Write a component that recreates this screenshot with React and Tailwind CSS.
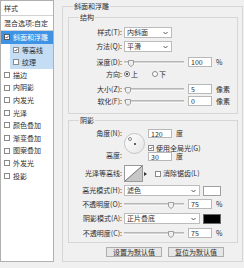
import React from "react";

const font = { fontFamily: '"Noto Sans CJK SC", "Noto Sans", sans-serif' };

const Check = ({ checked, dark }) => (
    <span
        className={`w-[6px] h-[6px] shrink-0 border bg-white flex items-center justify-center ${
            dark ? "border-[#5a5a5a]" : "border-[#8a8a8a]"
        }`}
    >
        {checked && (
            <svg width="6" height="6" viewBox="0 0 6 6">
                <path d="M0.8 3 L2.4 4.6 L5.3 1.2" stroke="#222" strokeWidth="1.1" fill="none" />
            </svg>
        )}
    </span>
);

const Label = ({ children }) => <div className="w-[53px] shrink-0 text-right whitespace-nowrap">{children}</div>;

const Chevron = () => (
    <svg width="5" height="4" viewBox="0 0 5 4">
        <path d="M0.5 1 L2.5 3 L4.5 1" stroke="#444" strokeWidth="0.9" fill="none" />
    </svg>
);

const Select = ({ value, w }) => (
    <div
        className={`${w} h-[11px] ml-[2px] bg-white border border-[#bcbcbc] flex items-center justify-between pl-[2px] pr-[3px]`}
    >
        <span className="leading-[9px]">{value}</span>
        <Chevron />
    </div>
);

const Slider = ({ pos }) => (
    <div className="relative w-[60px] h-[10px] ml-[2px] flex items-center">
        <div className="w-full h-[3px] bg-gradient-to-b from-[#a9a9a9] to-[#e2e2e2] border-b border-[#f8f8f8]" />
        <svg className="absolute top-[3px]" style={{ left: pos }} width="6" height="7" viewBox="0 0 6 7">
            <path d="M0.5 0.5 H5.5 V4.5 L3 6.5 L0.5 4.5 Z" fill="#efefef" stroke="#8c8c8c" strokeWidth="0.8" />
        </svg>
    </div>
);

const Input = ({ value, ml = "ml-[4px]", h = "h-[10px]" }) => (
    <div className={`w-[24px] ${h} ${ml} bg-white border border-[#b8b8b8] pl-[2px] flex items-center`}>
        <span className="leading-[8px]">{value}</span>
    </div>
);

const SliderRow = ({ label, pos, value, unit, mt }) => (
    <div className={`flex items-center h-[10px] ${mt}`}>
        <Label>{label}</Label>
        <Slider pos={pos} />
        <Input value={value} />
        <span className="ml-[4px]">{unit}</span>
    </div>
);

const Group = ({ title, className, children }) => (
    <div className={`relative border border-[#d6d6d6] ${className}`}>
        <span className="absolute -top-[5px] left-[10px] px-[1px] bg-[#f0f0f0] leading-[9px]">{title}</span>
        {children}
    </div>
);

const items = [
    { name: "斜面和浮雕", checked: true, state: "selected" },
    { name: "等高线", checked: true, state: "sub" },
    { name: "纹理", checked: false, state: "sub" },
    { name: "描边" },
    { name: "内阴影" },
    { name: "内发光" },
    { name: "光泽" },
    { name: "颜色叠加" },
    { name: "渐变叠加" },
    { name: "图案叠加" },
    { name: "外发光" },
    { name: "投影" },
];

const App = () => {
    return (
        <div className="w-[244px] h-[268px] bg-[#f0f0f0] flex text-[7px] text-[#2e2e2e] overflow-hidden" style={font}>
            {/* style list */}
            <div className="w-[54px] h-[262px] shrink-0 bg-white border border-[#b0b0b0] flex flex-col">
                <div className="h-[15px] border-b border-[#d2d2d2] pl-[3px] flex items-center">样式</div>
                <div className="h-[15px] border-b border-[#d2d2d2] pl-[3px] flex items-center whitespace-nowrap">
                    混合选项:自定
                </div>
                {items.map((item) =>
                    item.state === "sub" ? (
                        <div key={item.name} className="h-[12.6px] pl-[9px] flex">
                            <div className="flex-1 bg-[#c4ddf4] flex items-center pl-[3px] gap-[3px]">
                                <Check checked={item.checked} />
                                <span>{item.name}</span>
                            </div>
                        </div>
                    ) : (
                        <div
                            key={item.name}
                            className={`h-[12.6px] flex items-center pl-[3px] gap-[3px] ${
                                item.state === "selected" ? "bg-[#3f93e4] text-white" : ""
                            }`}
                        >
                            <Check checked={item.checked} dark={item.state === "selected"} />
                            <span>{item.name}</span>
                        </div>
                    )
                )}
            </div>

            {/* bevel & emboss */}
            <Group title="斜面和浮雕" className="ml-[8px] mt-[6px] w-[181px] h-[256px] shrink-0 pl-[5px]">
                <Group title="结构" className="mt-[10px] w-[170px] h-[97px] pt-[9px]">
                    <div className="flex items-center h-[11px]">
                        <Label>样式(T):</Label>
                        <Select value="内斜面" w="w-[48px]" />
                    </div>
                    <div className="flex items-center h-[11px] mt-[3px]">
                        <Label>方法(Q):</Label>
                        <Select value="平滑" w="w-[48px]" />
                    </div>
                    <SliderRow label="深度(D):" pos={4} value="100" unit="%" mt="mt-[5px]" />
                    <div className="flex items-center h-[10px] mt-[2px]">
                        <Label>方向:</Label>
                        <div className="ml-[2px] flex items-center gap-[1px]">
                            <span className="w-[6px] h-[6px] rounded-full border border-[#777] bg-white flex items-center justify-center">
                                <span className="w-[2px] h-[2px] rounded-full bg-[#222]" />
                            </span>
                            <span>上</span>
                        </div>
                        <div className="ml-[14px] flex items-center gap-[1px]">
                            <span className="w-[6px] h-[6px] rounded-full border border-[#888] bg-white" />
                            <span>下</span>
                        </div>
                    </div>
                    <SliderRow label="大小(Z):" pos={1} value="5" unit="像素" mt="mt-[5px]" />
                    <SliderRow label="软化(F):" pos={1} value="0" unit="像素" mt="mt-[2px]" />
                </Group>

                <Group title="阴影" className="mt-[6px] w-[170px] h-[123px] pt-[7px]">
                    <div className="flex items-start">
                        <div className="w-[53px] h-[32px] shrink-0 flex flex-col justify-between text-right">
                            <span className="leading-[10px]">角度(N):</span>
                            <span className="leading-[10px]">高度:</span>
                        </div>
                        <div className="relative ml-[2px] mt-[5px] w-[21px] h-[21px] rounded-full border border-[#c4c4c4] bg-gradient-to-br from-white to-[#e6e6e6] flex items-center justify-center">
                            <span className="w-[2px] h-[2px] rounded-full bg-[#333]" />
                            <span className="absolute left-[3px] top-[3px] w-[4px] h-[4px] rounded-full border border-[#888] bg-white" />
                        </div>
                        <div className="ml-[3px] flex flex-col">
                            <div className="flex items-center h-[9px] mt-[1px]">
                                <Input value="120" ml="ml-0" h="h-[9px]" />
                                <span className="ml-[4px]">度</span>
                            </div>
                            <div className="flex items-center h-[8px] mt-[6px] gap-[2px]">
                                <Check checked />
                                <span className="whitespace-nowrap">使用全局光(G)</span>
                            </div>
                            <div className="flex items-center h-[9px]">
                                <Input value="30" ml="ml-0" h="h-[9px]" />
                                <span className="ml-[4px]">度</span>
                            </div>
                        </div>
                    </div>

                    <div className="flex items-center h-[17px] mt-[4px]">
                        <Label>光泽等高线:</Label>
                        <div className="ml-[2px] w-[19px] h-[17px] bg-white border border-[#9a9a9a]">
                            <svg width="17" height="15" viewBox="0 0 17 15">
                                <path d="M0 15 L17 0 L17 15 Z" fill="#c7c7c7" />
                                <path d="M0 15 L17 0" stroke="#555" strokeWidth="0.8" />
                            </svg>
                        </div>
                        <svg className="ml-[1px]" width="3" height="4" viewBox="0 0 3 4">
                            <path d="M0 0 L3 2 L0 4 Z" fill="#333" />
                        </svg>
                        <div className="ml-[8px] flex items-center gap-[2px]">
                            <Check />
                            <span className="whitespace-nowrap">消除锯齿(L)</span>
                        </div>
                    </div>

                    <div className="flex items-center h-[11px] mt-[3px]">
                        <Label>高光模式(H):</Label>
                        <Select value="滤色" w="w-[76px]" />
                        <div className="ml-[3px] w-[18px] h-[10px] bg-white border border-[#a0a0a0]" />
                    </div>
                    <SliderRow label="不透明度(O):" pos={44} value="75" unit="%" mt="mt-[3px]" />
                    <div className="flex items-center h-[11px] mt-[4px]">
                        <Label>阴影模式(A):</Label>
                        <Select value="正片叠底" w="w-[76px]" />
                        <div className="ml-[3px] w-[18px] h-[10px] bg-black border border-[#6a6a6a]" />
                    </div>
                    <SliderRow label="不透明度(C):" pos={44} value="75" unit="%" mt="mt-[4px]" />
                </Group>

                <div className="flex gap-[6px] pl-[38px] mt-[4px]">
                    <div className="w-[56px] h-[10px] bg-[#e6e6e6] border border-[#adadad] flex items-center justify-center">
                        设置为默认值
                    </div>
                    <div className="w-[56px] h-[10px] bg-[#e6e6e6] border border-[#adadad] flex items-center justify-center">
                        复位为默认值
                    </div>
                </div>
            </Group>
        </div>
    );
};

export default App;
